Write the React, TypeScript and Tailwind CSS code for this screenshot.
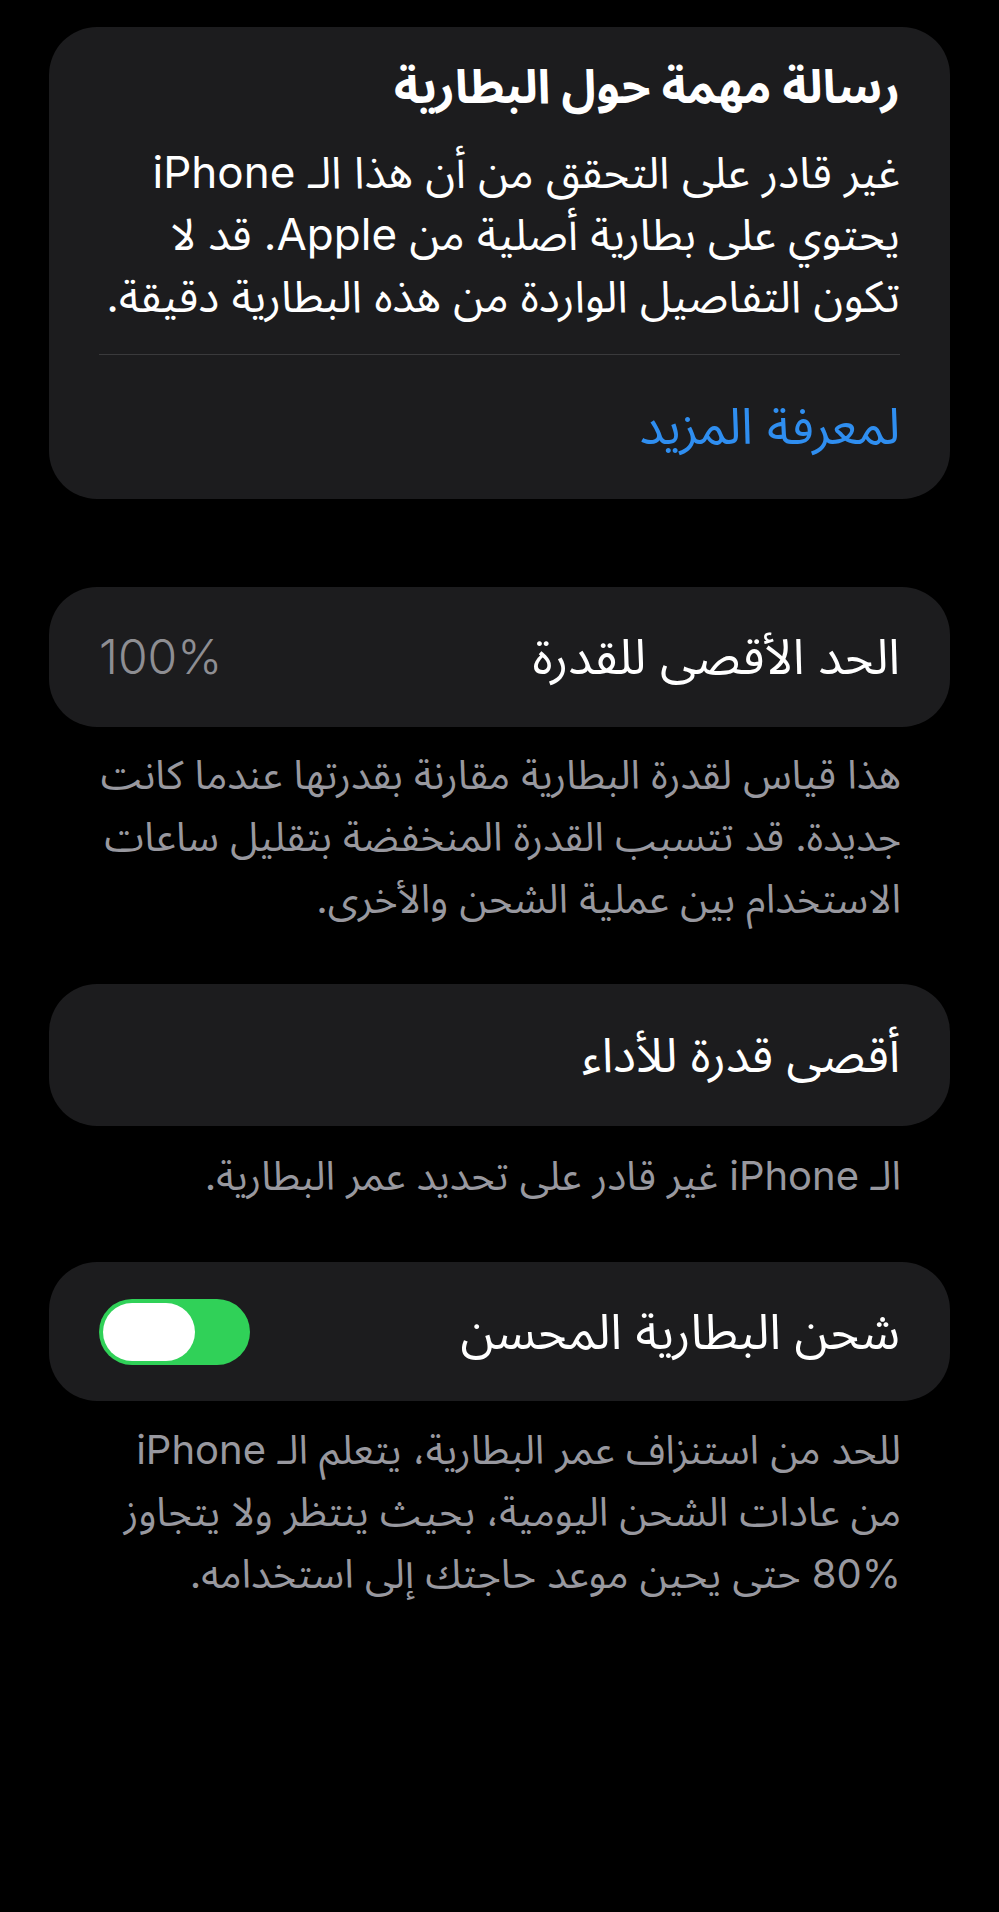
import React from 'react';

const font = { fontFamily: 'Inter, "Noto Sans Arabic", "Noto Naskh Arabic", "DejaVu Sans", sans-serif' };

const Card: React.FC<{ children: React.ReactNode; className?: string }> = ({ children, className = '' }) => (
    <div className={`mx-[49px] rounded-[48px] bg-[#1c1c1e] px-[50px] ${className}`}>{children}</div>
);

const Footer: React.FC<{ lines: string[]; className?: string }> = ({ lines, className = '' }) => (
    <p className={`px-[98px] text-[40px] leading-[62px] text-[#98989f] ${className}`}>
        {lines.map((l) => (
            <span key={l} className="block whitespace-nowrap">{l}</span>
        ))}
    </p>
);

export default function App() {
    return (
        <div dir="rtl" className="min-h-[1912px] w-full bg-black pt-[27px] text-white" style={font}>
            <Card className="pt-[28px] pb-[42px]">
                <h2 className="text-[47px] font-bold leading-[62px]">رسالة مهمة حول البطارية</h2>
                <p className="mt-[24px] text-[44px] leading-[62px]">
                    <span className="block whitespace-nowrap">غير قادر على التحقق من أن هذا الـ iPhone</span>
                    <span className="block whitespace-nowrap">يحتوي على بطارية أصلية من Apple. قد لا</span>
                    <span className="block whitespace-nowrap">تكون التفاصيل الواردة من هذه البطارية دقيقة.</span>
                </p>
                <div className="mt-[27px] h-px bg-[#3a3a3c]" />
                <div className="mt-[40px] text-[50px] leading-[62px] text-[#2f8ef0]">لمعرفة المزيد</div>
            </Card>

            <Card className="mt-[88px] flex h-[140px] items-center justify-between">
                <span className="text-[49px]">الحد الأقصى للقدرة</span>
                <span className="text-[48px] font-light text-[#8e8e93]">100%</span>
            </Card>
            <Footer
                className="mt-[17px]"
                lines={[
                    'هذا قياس لقدرة البطارية مقارنة بقدرتها عندما كانت',
                    'جديدة. قد تتسبب القدرة المنخفضة بتقليل ساعات',
                    'الاستخدام بين عملية الشحن والأخرى.',
                ]}
            />

            <Card className="mt-[54px] flex h-[142px] items-center">
                <span className="text-[48px]">أقصى قدرة للأداء</span>
            </Card>
            <Footer className="mt-[19px]" lines={['الـ iPhone غير قادر على تحديد عمر البطارية.']} />

            <Card className="mt-[55px] flex h-[139px] items-center justify-between">
                <span className="text-[49px]">شحن البطارية المحسن</span>
                <div className="flex h-[66px] w-[151px] items-center justify-end rounded-full bg-[#30d158] px-[4px]">
                    <div className="h-[58px] w-[92px] rounded-full bg-white" />
                </div>
            </Card>
            <Footer
                className="mt-[18px]"
                lines={[
                    'للحد من استنزاف عمر البطارية، يتعلم الـ iPhone',
                    'من عادات الشحن اليومية، بحيث ينتظر ولا يتجاوز',
                    '80% حتى يحين موعد حاجتك إلى استخدامه.',
                ]}
            />
        </div>
    );
}
